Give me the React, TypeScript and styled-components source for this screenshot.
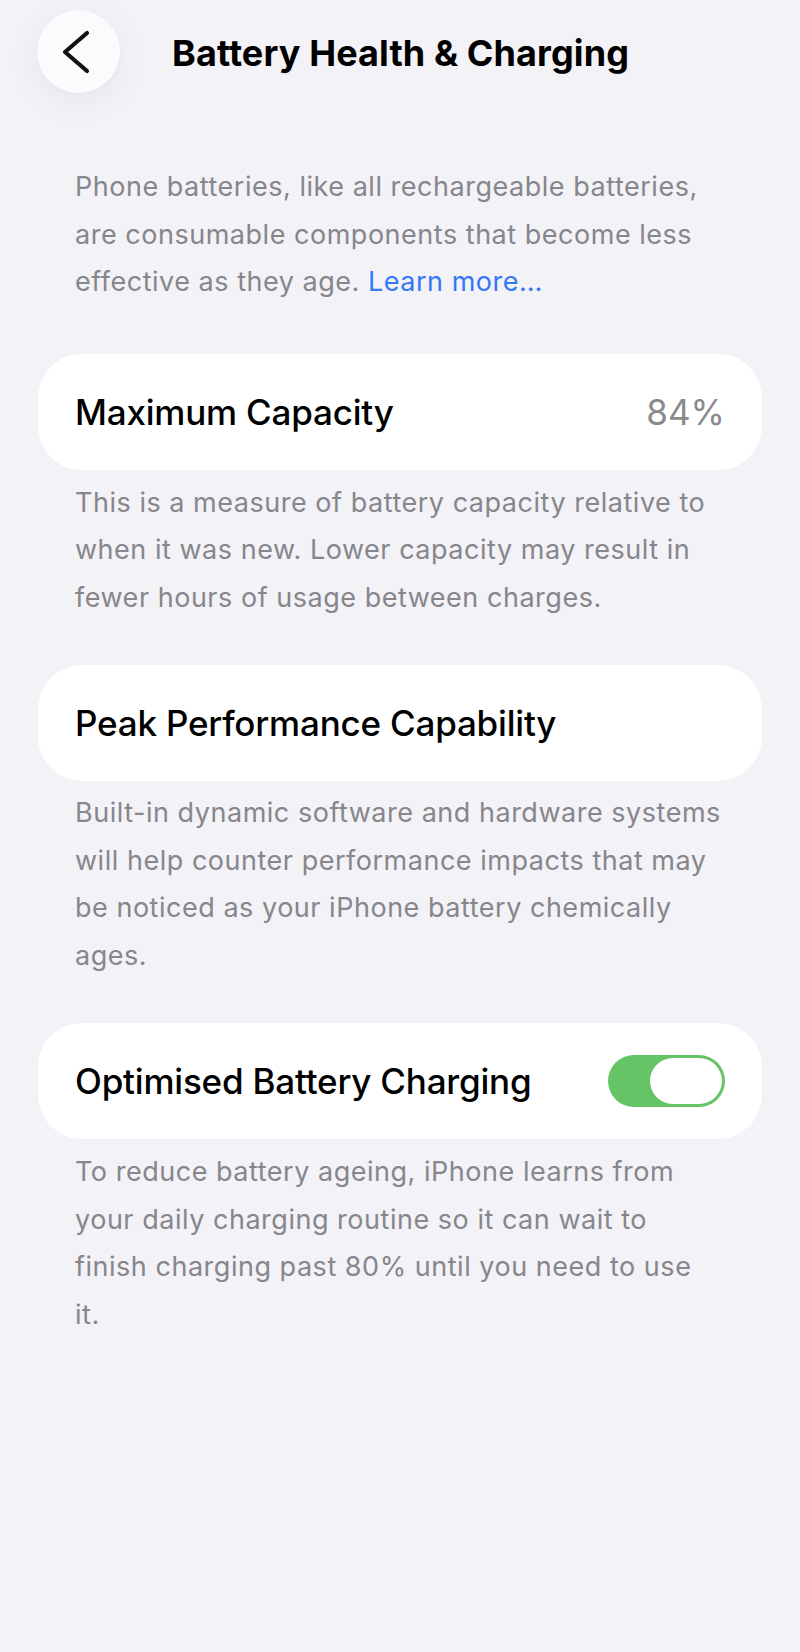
import React, { useState } from 'react';
import styled, { createGlobalStyle } from 'styled-components';

const GlobalStyle = createGlobalStyle`
  html, body {
    margin: 0;
    padding: 0;
    background: #f2f2f7;
  }
  body {
    font-family: Inter, "Noto Sans", "Liberation Sans", sans-serif;
    -webkit-font-smoothing: antialiased;
  }
`;

const Page = styled.div`
  min-height: 1652px;
  box-sizing: border-box;
  padding: 10px 38px 0;
  background: #f2f2f7;
`;

const NavBar = styled.header`
  display: flex;
  align-items: center;
  height: 83px;
`;

const BackButton = styled.button`
  display: flex;
  align-items: center;
  justify-content: center;
  flex: none;
  width: 83px;
  height: 83px;
  margin-left: -1px;
  padding: 0 6px 0 0;
  border: none;
  border-radius: 50%;
  background: #fbfbfd;
  box-shadow: 0 8px 34px rgba(0, 0, 0, 0.06), 0 1px 4px rgba(0, 0, 0, 0.02);
  cursor: pointer;
`;

const Title = styled.h1`
  margin: 2px 0 0 52px;
  font-size: 36px;
  font-weight: 700;
  letter-spacing: 0.1px;
  color: #000;
`;

const Note = styled.p<{ $gap: number }>`
  margin: ${({ $gap }) => $gap}px 0 0;
  padding: 0 40px 0 37px;
  font-size: 27px;
  letter-spacing: 0.52px;
  line-height: 47.5px;
  color: #86868b;
`;

const Link = styled.a`
  color: #3478f6;
  text-decoration: none;
`;

const Card = styled.section<{ $gap: number }>`
  display: flex;
  align-items: center;
  justify-content: space-between;
  height: 116px;
  margin-top: ${({ $gap }) => $gap}px;
  padding: 0 37px;
  border-radius: 44px;
  background: #fff;
`;

const Label = styled.span`
  font-size: 35px;
  font-weight: 500;
  letter-spacing: -0.2px;
  color: #000;
`;

const Value = styled.span`
  font-size: 35px;
  color: #8a8a8e;
`;

const Switch = styled.button<{ $on: boolean }>`
  display: flex;
  justify-content: ${({ $on }) => ($on ? 'flex-end' : 'flex-start')};
  align-items: center;
  flex: none;
  width: 117px;
  height: 52px;
  padding: 3px;
  box-sizing: border-box;
  border: none;
  border-radius: 26px;
  background: ${({ $on }) => ($on ? '#64c466' : '#e9e9eb')};
  cursor: pointer;
`;

const Knob = styled.span`
  width: 72px;
  height: 46px;
  border-radius: 23px;
  background: #fff;
`;

function BackChevron() {
  return (
    <svg width="34" height="44" viewBox="0 0 34 44" fill="none">
      <path
        d="M28 3 L6 22 L28 41"
        stroke="#111"
        strokeWidth="4.2"
        strokeLinecap="round"
        strokeLinejoin="round"
      />
    </svg>
  );
}

export default function App() {
  const [optimised, setOptimised] = useState(true);

  return (
    <>
      <GlobalStyle />
      <Page>
        <NavBar>
          <BackButton aria-label="Back">
            <BackChevron />
          </BackButton>
          <Title>Battery Health &amp; Charging</Title>
        </NavBar>

        <Note $gap={70}>
          Phone batteries, like all rechargeable batteries, are consumable components that become
          less effective as they age. <Link href="#">Learn more…</Link>
        </Note>

        <Card $gap={48}>
          <Label>Maximum Capacity</Label>
          <Value>84%</Value>
        </Card>
        <Note $gap={9}>
          This is a measure of battery capacity relative to when it was new. Lower capacity may
          result in fewer hours of usage between charges.
        </Note>

        <Card $gap={44}>
          <Label>Peak Performance Capability</Label>
        </Card>
        <Note $gap={8}>
          Built-in dynamic software and hardware systems will help counter performance impacts that
          may be noticed as your iPhone battery chemically ages.
        </Note>

        <Card $gap={44}>
          <Label>Optimised Battery Charging</Label>
          <Switch
            $on={optimised}
            role="switch"
            aria-checked={optimised}
            onClick={() => setOptimised(!optimised)}
          >
            <Knob />
          </Switch>
        </Card>
        <Note $gap={9}>
          To reduce battery ageing, iPhone learns from your daily charging routine so it can wait to
          finish charging past 80% until you need to use it.
        </Note>
      </Page>
    </>
  );
}
